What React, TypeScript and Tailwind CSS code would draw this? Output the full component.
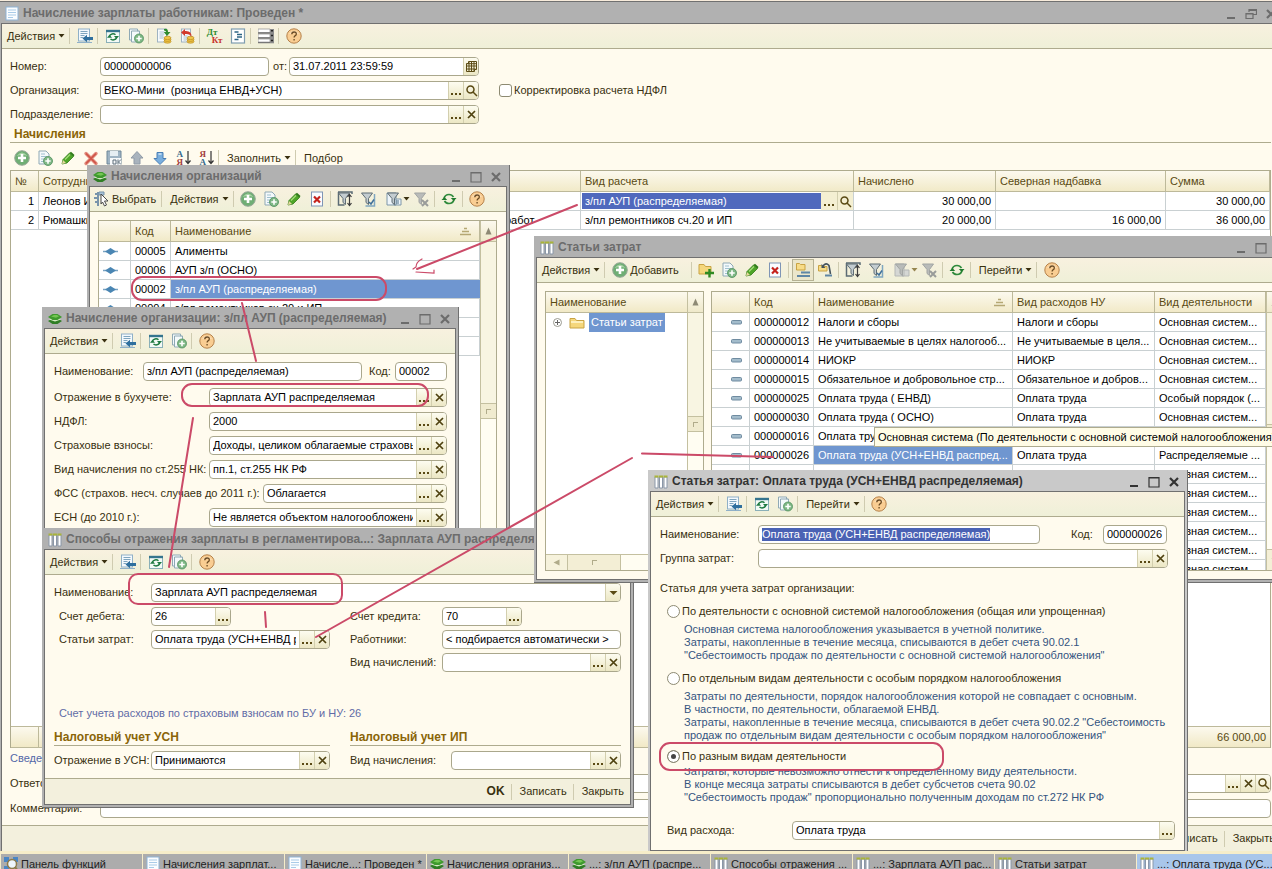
import { useEffect, useId, useRef } from "react";
import type { ReactNode } from "react";

/* ---------- icons ---------- */

function Svg({ children, w = 16, h = 16 }: { children: ReactNode; w?: number; h?: number }) {
  return (
    <svg width={w} height={h} viewBox={`0 0 ${w} ${h}`} fill="none" aria-hidden="true" className="shrink-0">
      {children}
    </svg>
  );
}

const PlusBadge = ({ x = 11, y = 11, r = 4.5 }: { x?: number; y?: number; r?: number }) => (
  <g>
    <circle cx={x} cy={y} r={r} fill="#7fb886" stroke="#4f8f5c" strokeWidth="0.8" />
    <path d={`M${x - r * 0.6} ${y}h${r * 1.2}M${x} ${y - r * 0.6}v${r * 1.2}`} stroke="#fff" strokeWidth={r > 5 ? 2.2 : 1.6} />
  </g>
);

const DocIcon = () => (
  <Svg>
    <rect x="2" y="1" width="12" height="13" fill="#fbfdff" stroke="#8fb3d6" />
    <path d="M4 4h8M4 6.500h8M4 9h8M4 11.500h5" stroke="#a9cbe8" />
  </Svg>
);
const LayersIcon = () => (
  <Svg>
    <path d="M1 10l4.500-2.500h5L15 10l-4.500 3h-5z" fill="#2f7d25" />
    <path d="M2 8.500l6-2.500 6 2.500-6 2z" fill="#d5ebc4" />
    <path d="M1 6l4.500-3h5L15 6l-4.500 3h-5z" fill="#3f9a2e" />
    <path d="M4 5.500l3-1.500h3l2 1.200-3 1.600z" fill="#74c653" />
  </Svg>
);
const TableIcon = () => (
  <Svg>
    <path d="M2 3h3v11H2zM6.500 3h3v11h-3zM11 3h3v11h-3z" fill="#fff" stroke="#8a97a8" />
    <path d="M1.500 2.500h4M6 2.500h4M10.500 2.500h4" stroke="#a9b43a" strokeWidth="2" />
  </Svg>
);
const GotoIcon = () => (
  <Svg>
    <rect x="1.500" y="1" width="11" height="12" fill="#f4f9fd" stroke="#8fb0c8" />
    <path d="M3.500 3.500h7M3.500 5.500h7M3.500 7.500h4M3.500 9.500h3" stroke="#7fa5bf" />
    <path d="M0 14.500h15" stroke="#8fb0c8" />
    <path d="M5.500 10.500L10 6.800v2.200h6v3h-6v2.200z" fill="#2f6f9e" />
  </Svg>
);
const RefreshWindowIcon = () => (
  <Svg>
    <rect x="1.500" y="2.500" width="13" height="12" fill="#f3faf6" stroke="#8ab0b8" />
    <path d="M1 3h14" stroke="#35748e" strokeWidth="2.400" />
    <path d="M4.500 8a3.500 2.800 0 0 1 6-1.200M11.500 9.800a3.500 2.800 0 0 1-6 1.200" stroke="#1f7a42" strokeWidth="1.500" />
    <path d="M9 8h5l-2.500 3zM2 9.800h5L4.500 6.800z" fill="#1f7a42" />
  </Svg>
);
const CopyDocIcon = () => (
  <Svg>
    <path d="M1.500 1h8v2h2v11h-8v-2h-2z" fill="#f4f9fb" stroke="#8fa9b5" />
    <path d="M3.500 12V3h7" stroke="#8fa9b5" />
    <PlusBadge x={11} y={10.500} />
  </Svg>
);
const NewDocIcon = () => (
  <Svg>
    <path d="M2 1h7l3 3v10H2z" fill="#f4f9fb" stroke="#8fa9b5" />
    <path d="M4 4h4M4 6.500h6M4 9h4M4 11.500h3" stroke="#9fc0cf" />
    <PlusBadge x={11} y={11} />
  </Svg>
);
const Coins = () => (
  <g fill="#f0c648" stroke="#b98a1c" strokeWidth="0.7">
    <ellipse cx="11.500" cy="13.500" rx="3.500" ry="1.700" />
    <ellipse cx="11.500" cy="11.700" rx="3.500" ry="1.700" />
    <ellipse cx="11.500" cy="9.900" rx="3.500" ry="1.700" />
  </g>
);
const PostIcon = () => (
  <Svg>
    <rect x="1.500" y="1" width="9" height="13" fill="#f7fafc" stroke="#9fb3c2" />
    <path d="M3.500 4h5M3.500 6h5M3.500 8h4M3.500 10h4" stroke="#a9bfce" />
    <Coins />
    <path d="M8 1q4-1 4 3h2.500L11 8 7.800 4H10q0-1.500-2-1.500z" fill="#2e8b2e" />
  </Svg>
);
const UnpostIcon = () => (
  <Svg>
    <rect x="2.500" y="1" width="9" height="13" fill="#f7fafc" stroke="#9fb3c2" />
    <path d="M4.500 8h4M4.500 10h4M4.500 12h3" stroke="#a9bfce" />
    <Coins />
    <path d="M2 4.500L6 1v2q7-.5 6.500 6Q11 5.500 6 6v2z" fill="#d23a2c" />
  </Svg>
);
const DtKtIcon = () => (
  <span aria-hidden="true" className="relative block size-4 font-serif text-[9px] leading-[8px] font-bold">
    <span className="absolute top-0 left-0 text-[#2e8b2e]">Дт</span>
    <span className="absolute top-[8px] left-[5px] text-[#c8322b]">Кт</span>
  </span>
);
const ReportIcon = () => (
  <Svg>
    <rect x="1.500" y="1" width="13" height="14" fill="#fff" stroke="#7f9db0" strokeWidth="1.200" />
    <path d="M4.500 4h4M7 6.500h5M7 9h5M4.500 11.500h4" stroke="#2c6484" strokeWidth="1.400" />
  </Svg>
);
const RowsIcon = () => (
  <Svg>
    <path d="M0 1h12v3.500H0zM0 6h12v3.500H0zM0 11h12v3.500H0z" fill="#fff" stroke="#9a9a9a" strokeWidth="0.8" />
    <path d="M0 5h16M0 10h16M0 14.500h16" stroke="#777" strokeWidth="1.300" />
    <path d="M12 1h4v14h-4z" fill="#8b8b8b" />
    <path d="M13 2.800h2M13 7.500h2M13 12.500h2" stroke="#222" strokeWidth="1.600" />
  </Svg>
);
const HelpIcon = () => (
  <Svg>
    <circle cx="8" cy="8" r="7.200" fill="#f9cd92" stroke="#b5814a" />
    <path d="M3 6q5-6 10 0-5-2-10 0z" fill="#fdebcf" />
    <path d="M5.800 6.200q0-2.200 2.300-2.200t2.200 2q0 1.200-1.300 1.900-.9.500-.9 1.600M8.100 11v1.600" stroke="#6b4a22" strokeWidth="1.300" />
  </Svg>
);
const AddIcon = () => (
  <Svg>
    <circle cx="8" cy="8" r="7.300" fill="#6fae74" stroke="#98a898" />
    <path d="M2.500 6q5.500-7 11 0-5-2-11 0z" fill="#a9d3a6" />
    <path d="M4 8h8M8 4v8" stroke="#fff" strokeWidth="2.600" />
  </Svg>
);
const PencilIcon = () => (
  <Svg>
    <path d="M2 14l1-4.500L9.500 3l4 3.500L7 13z" fill="#4ea528" stroke="#2f7a18" strokeWidth="0.8" />
    <path d="M9.500 3l1.500-1.200 3.500 3.200-1 1.500z" fill="#2f7a18" />
    <path d="M2 14l1-4 3 3z" fill="#e7d9a0" />
    <path d="M5 9.500l5-5" stroke="#a5dd7a" strokeWidth="1.300" />
  </Svg>
);
const RedXIcon = () => (
  <Svg>
    <path d="M3 3.500l10 10M13 3.500l-10 10" stroke="#e28a7c" strokeWidth="3.400" strokeLinecap="round" />
    <path d="M3 3.500l10 10M13 3.500l-10 10" stroke="#cf5548" strokeWidth="1.600" />
  </Svg>
);
const SaveIcon = () => (
  <Svg>
    <path d="M1 1h14v13H1z" fill="#9fb4c4" stroke="#6f8798" />
    <path d="M4 1h8v5H4z" fill="#e6eef3" />
    <path d="M4 8h11v7H4z" fill="#f7f9fa" />
    <path d="M7 10h3v4H7zM12 9.500v5M15 9.500l-2.500 2.500 2.500 2.500" stroke="#5c6c78" />
  </Svg>
);
const UpIcon = () => (
  <Svg>
    <path d="M8 1.500L14 8h-3v6H5V8H2z" fill="#a9b3bd" stroke="#8f9aa6" />
  </Svg>
);
const DownIcon = () => (
  <Svg>
    <path d="M8 14.500L14 8.500h-3V2.500H5v6H2z" fill="#79aede" stroke="#4a7fb5" />
    <path d="M6.500 4h3" stroke="#cfe4f6" strokeWidth="1.500" />
  </Svg>
);
const SortIcon = ({ top, bottom }: { top: string; bottom: string }) => (
  <span aria-hidden="true" className="relative block size-4 font-serif text-[9px] leading-[8px] font-bold">
    <span className={`absolute top-0 left-[2px] ${top === "А" ? "text-[#35688c]" : "text-[#a33b3b]"}`}>{top}</span>
    <span className={`absolute top-[8px] left-[2px] ${top === "А" ? "text-[#a33b3b]" : "text-[#35688c]"}`}>{bottom}</span>
    <svg viewBox="0 0 6 15" className="absolute top-0 right-0 h-[15px] w-[6px]" fill="none">
      <path d="M3 1v12M0.500 10.500L3 13.500l2.500-3" stroke="#333" strokeWidth="1.200" />
    </svg>
  </span>
);
const DeleteDocIcon = () => (
  <Svg>
    <rect x="2.500" y="1" width="11" height="14" fill="#fafcff" stroke="#7f95b5" />
    <path d="M5 5.500l6 6M11 5.500l-6 6" stroke="#c5221c" strokeWidth="2.200" />
  </Svg>
);
const FunnelIcon = ({ kind }: { kind: "settings" | "value" | "history" | "historyOff" | "clear" }) => {
  const dim = kind === "historyOff" || kind === "clear";
  return (
    <Svg>
      {kind === "settings" && <path d="M1 1h14v2M1.500 1v13h6" stroke="#5b6b74" strokeWidth="1.500" />}
      {kind === "value" && <path d="M14.500 3v12h-9" stroke="#7fa6c0" strokeWidth="1.500" />}
      {(kind === "history" || kind === "historyOff") && (
        <path d="M1 2h9v12H1zM8 8h7v6H8z" fill={dim ? "#d5d7d4" : "#eef5fa"} stroke={dim ? "#b5b8b6" : "#7d96a8"} />
      )}
      <path d="M1.500 2h11L8.500 7.500v6l-2.500-2v-4z" fill={dim ? "#b9bbb9" : "#c3ccd0"} stroke={dim ? "#a2a5a3" : "#5f6d74"} />
      {kind === "settings" && <path d="M12.500 4v10M10.500 12l2 2.500 2-2.500M10.500 6l2-2.500 2 2.500" stroke="#3d3d3d" strokeWidth="1.200" />}
      {kind === "value" && <path d="M9 11l2 2 3-4.500" stroke="#3f6f9a" strokeWidth="1.500" />}
      {kind === "history" && <path d="M10 10h3M10 12h3" stroke="#4f7088" />}
      {kind === "clear" && <path d="M9 9l6 6M15 9l-6 6" stroke="#999c9a" strokeWidth="2" />}
    </Svg>
  );
};
const RefreshIcon = () => (
  <Svg>
    <path d="M3 7.500Q4 3.500 8 3.500q3 0 4.500 2.500M13 8.500q-1 4-5 4-3 0-4.500-2.500" stroke="#2f8a3c" strokeWidth="1.700" />
    <path d="M9.800 7h5.700l-2.700 3zM.500 9h5.700L3.400 6z" fill="#1f7a2d" />
  </Svg>
);
const ChooseIcon = () => (
  <Svg>
    <path d="M4 1v14M1 3h3M0 7h3M1 11h3" stroke="#7793ab" strokeWidth="2" />
    <path d="M5 1h5v3H5z" fill="#a9c4da" stroke="#7793ab" />
    <path d="M7 3l7 7h-3.500l2 4-2 1-2-4L7 13z" fill="#fff" stroke="#4a4a4a" />
  </Svg>
);
const FolderIcon = () => (
  <Svg>
    <path d="M1 13V3.500h5l1.500 2H15V13z" fill="#f5d77c" stroke="#c9a343" />
    <path d="M2 7h12" stroke="#fdf0bd" strokeWidth="2" />
  </Svg>
);
const FolderAddIcon = () => (
  <Svg>
    <path d="M1 12V2.500h5l1.500 2H13V12z" fill="#f5d77c" stroke="#c9a343" />
    <path d="M7 11h9M11.500 7v8.500" stroke="#2f8a22" strokeWidth="2.400" />
  </Svg>
);
const HierarchyIcon = () => (
  <Svg>
    <path d="M1.500 8V1.500h3l1 1H10V8z" fill="#f7dc88" stroke="#c9a343" />
    <path d="M6 10.500h9M2 14h13" stroke="#5f86a5" strokeWidth="2" />
  </Svg>
);
const MoveIcon = () => (
  <Svg>
    <path d="M1.500 9V3.500h3l1 1H10V9z" fill="#f7dc88" stroke="#c9a343" />
    <path d="M6 4Q9 0 12 3.500l1.500 8.500" stroke="#44525c" strokeWidth="1.600" />
    <path d="M4.500 2v4h4z" fill="#44525c" />
    <path d="M8 13.500h7" stroke="#5f86a5" strokeWidth="2" />
  </Svg>
);
const PanelIcon = () => (
  <Svg>
    <path d="M1 1h5v5H1zM10 1h5v5h-5zM1 10h5v5H1z" fill="#4a86c5" />
    <circle cx="9" cy="8" r="4.500" fill="#eef6fc" stroke="#8d7b4a" strokeWidth="1.500" />
    <path d="M12 11l3 4" stroke="#8d7b4a" strokeWidth="2" />
  </Svg>
);
const Caret = ({ dim = false }: { dim?: boolean }) => (
  <Svg w={7} h={4}>
    <path d="M0.500 0h6L3.500 3.500z" fill={dim ? "#96854f" : "#3a3010"} />
  </Svg>
);
const SortMark = () => (
  <Svg w={13} h={9}>
    <path d="M5 1.500h3M3 4.500h7M1 7.500h11" stroke="#b5a773" strokeWidth="1.500" />
  </Svg>
);

/* ---------- controls ---------- */

type FieldButton = "dots" | "x" | "search" | "calendar" | "drop";

const BUTTON_TITLES: Record<FieldButton, string> = {
  dots: "Выбрать",
  x: "Очистить",
  search: "Открыть",
  calendar: "Календарь",
  drop: "Список",
};

function FieldGlyph({ kind }: { kind: FieldButton }) {
  return (
    <Svg w={13} h={13}>
      {kind === "dots" && <path d="M1 9h2v2H1zM5 9h2v2H5zM9 9h2v2H9z" fill="#5a4a14" />}
      {kind === "x" && <path d="M3 3l7 7M10 3l-7 7" stroke="#4f4210" strokeWidth="1.700" />}
      {kind === "search" && <path d="M9 5.500a3.500 3.500 0 1 1-7 0 3.500 3.500 0 0 1 7 0zM8 8l4 4" stroke="#5a4a14" strokeWidth="1.500" />}
      {kind === "calendar" && <path d="M3.500 1.500h8v8h-2v2h-8v-8h2zM1.500 6h10M1.500 9h9M4 2v9M6.500 2v9M9 2v9M2 3.700h9" stroke="#5a4a14" />}
      {kind === "drop" && <path d="M2.500 5h8l-4 4z" fill="#5a4a14" />}
    </Svg>
  );
}

function Field({
  value = "",
  buttons = [],
  className = "",
  label,
  id,
  selected = false,
}: {
  value?: string;
  buttons?: FieldButton[];
  className?: string;
  label?: string;
  id?: string;
  selected?: boolean;
}) {
  const ref = useRef<HTMLInputElement>(null);
  useEffect(() => {
    if (selected && ref.current) {
      ref.current.focus({ preventScroll: true });
      ref.current.select();
    }
  }, [selected]);
  return (
    <div className={`flex h-[19px] min-w-0 overflow-hidden rounded-[4px] border border-[#aaa78c] bg-white ${className}`}>
      <input
        ref={ref}
        id={id}
        aria-label={label}
        defaultValue={value}
        className="min-w-0 flex-1 bg-transparent px-[3px] text-black outline-none selection:bg-[#4a62b4] selection:text-white"
      />
      {buttons.map((b) => (
        <button
          key={b}
          type="button"
          aria-label={BUTTON_TITLES[b]}
          className="flex w-[15px] shrink-0 items-center justify-center border-l border-[#d3cfae] bg-linear-to-b from-[#fdfcf0] to-[#ece7c4]"
        >
          <FieldGlyph kind={b} />
        </button>
      ))}
    </div>
  );
}

function Row({
  label,
  labelClass,
  fieldClass = "flex-1",
  value,
  buttons,
  selected,
}: {
  label: string;
  labelClass: string;
  fieldClass?: string;
  value?: string;
  buttons?: FieldButton[];
  selected?: boolean;
}) {
  const id = useId();
  return (
    <>
      <label htmlFor={id} className={`shrink-0 whitespace-nowrap ${labelClass}`}>
        {label}
      </label>
      <Field id={id} value={value} buttons={buttons} className={fieldClass} selected={selected} />
    </>
  );
}

const Sep = () => <span className="mr-[3px] ml-px h-4 w-px shrink-0 bg-[#cfcbb0]" />;

function Tool({ title, children }: { title: string; children: ReactNode }) {
  return (
    <button type="button" aria-label={title} className="flex h-[22px] w-[23px] shrink-0 items-center justify-center">
      {children}
    </button>
  );
}

function DropTool({ title, children, dim }: { title: string; children: ReactNode; dim?: boolean }) {
  return (
    <button type="button" aria-label={title} className="flex h-[22px] w-[30px] shrink-0 items-center justify-end">
      {children}
      <span className="ml-px">
        <Caret dim={dim} />
      </span>
    </button>
  );
}

function TextTool({ children, caret = false, icon }: { children: ReactNode; caret?: boolean; icon?: ReactNode }) {
  return (
    <button type="button" className={`flex shrink-0 items-center whitespace-nowrap ${icon ? "gap-[2px] px-[4px]" : caret ? "gap-[3px] pr-[3px] pl-[5px]" : "px-[5px]"}`}>
      {icon}
      <span>{children}</span>
      {caret && <Caret />}
    </button>
  );
}

const Toolbar = ({ children }: { children: ReactNode }) => (
  <div className="flex h-[25px] shrink-0 items-center overflow-hidden border-b border-[#aeab8e] bg-linear-to-b from-[#f8f1df] to-[#eff0d8]">
    {children}
  </div>
);

const CommonTools = () => (
  <>
    <TextTool caret>Действия</TextTool>
    <Sep />
    <Tool title="Перейти к списку"><GotoIcon /></Tool>
    <Sep />
    <Tool title="Перечитать"><RefreshWindowIcon /></Tool>
    <Tool title="Скопировать"><CopyDocIcon /></Tool>
  </>
);

function Window({
  title,
  icon,
  className,
  active = false,
  restore = false,
  children,
}: {
  title: string;
  icon: ReactNode;
  className: string;
  active?: boolean;
  restore?: boolean;
  children: ReactNode;
}) {
  const tone = active ? "text-[#333]" : "text-[#6c6c6c]";
  return (
    <section
      aria-label={title}
      className={`absolute flex flex-col border-r border-b border-[#707070] px-[2px] pb-[2px] ${active ? "bg-[#c9c9c9]" : "bg-[#b1b1b1]"} ${className}`}
    >
      <header className={`flex h-[21px] shrink-0 items-center pt-[2px] pr-px pl-[3px] ${tone}`}>
        {icon}
        <h2 className="ml-[3px] min-w-0 flex-1 overflow-hidden text-[12px] font-bold whitespace-pre">{title}</h2>
        <button type="button" aria-label="Свернуть" className="flex w-5 justify-center">
          <Svg w={12} h={12}><path d="M2 10h8" stroke="currentColor" strokeWidth="2" /></Svg>
        </button>
        <button type="button" aria-label="Развернуть" className="flex w-5 justify-center">
          <Svg w={12} h={12}>
            {restore ? (
              <path d="M4 4V1.500h7.500v5H8M1 5.500h7v5H1zM4 2.500h7M1 6h7" stroke="currentColor" strokeWidth="1.200" />
            ) : (
              <path d="M1 1.500h10v9.500H1zM1 2h10" stroke="currentColor" strokeWidth="1.200" />
            )}
          </Svg>
        </button>
        <button type="button" aria-label="Закрыть" className="flex w-5 justify-center">
          <Svg w={12} h={12}><path d="M2 2l8 8M10 2l-8 8" stroke="currentColor" strokeWidth="2.200" /></Svg>
        </button>
      </header>
      <div className="flex min-h-0 flex-1 flex-col border border-[#707070] bg-[#fffbee]">{children}</div>
    </section>
  );
}

const TH = "h-[21px] overflow-hidden border-r border-b border-[#bdb99a] px-[4px] text-left font-normal whitespace-nowrap text-[#594a12]";
const TD = "h-[19px] overflow-hidden border-r border-b border-[#c9d0d2] px-[4px] whitespace-nowrap text-black";
const HEAD = "bg-linear-to-b from-[#fcf9ee] to-[#f1e9c6]";
const TABLE = "w-full table-fixed border-separate border-spacing-0";

function Scroll({ track, bottom = false }: { track: string; bottom?: boolean }) {
  return (
    <div aria-hidden="true" className="flex w-4 shrink-0 flex-col border-l border-[#c4c0a0] bg-[#fffdf2]">
      <span className="flex h-[21px] shrink-0 items-center justify-center border-b border-[#c4c0a0] bg-linear-to-b from-[#fcf9ee] to-[#efe9ca]">
        <Svg w={7} h={8}><path d="M3.500 0.500L6.500 7.500h-6z" fill="#8d8974" /></Svg>
      </span>
      <span className={`shrink-0 bg-[#f8f5e2] ${track}`} />
      <span className="flex h-4 shrink-0 items-center justify-center border-y border-[#c4c0a0] bg-[#f0ebcf]">
        <span className="size-[5px] border-t border-l border-[#b0ab8a]" />
      </span>
      <span className="flex-1" />
      {bottom && (
        <span className="flex h-[21px] shrink-0 items-center justify-center border-t border-[#c4c0a0] bg-[#f4efd6]">
          <Caret dim />
        </span>
      )}
    </div>
  );
}

/* ---------- windows ---------- */

function MainWindow() {
  const checkId = useId();
  const commentId = useId();
  return (
    <Window title="Начисление зарплаты работникам: Проведен *" icon={<DocIcon />} restore className="top-px right-[-13px] bottom-[-4px] left-[-1px] border-t">
      <Toolbar>
        <CommonTools />
        <Sep />
        <Tool title="Провести"><PostIcon /></Tool>
        <Tool title="Отменить проведение"><UnpostIcon /></Tool>
        <Sep />
        <Tool title="Дт Кт"><DtKtIcon /></Tool>
        <Tool title="Отчет"><ReportIcon /></Tool>
        <Sep />
        <Tool title="Список"><RowsIcon /></Tool>
        <Sep />
        <Tool title="Справка"><HelpIcon /></Tool>
      </Toolbar>
      <div className="flex min-h-0 flex-1 flex-col pr-[10px] pl-2">
        <div className="flex flex-col gap-[5px] pt-[8px]">
          <div className="flex items-center">
            <Row label="Номер:" labelClass="w-[90px]" fieldClass="w-[169px]" value="00000000006" />
            <Row label="от:" labelClass="ml-1 w-4" fieldClass="w-[190px]" value="31.07.2011 23:59:59" buttons={["calendar"]} />
          </div>
          <div className="flex items-center">
            <Row label="Организация:" labelClass="w-[90px]" fieldClass="w-[379px]" value="ВЕКО-Мини  (розница ЕНВД+УСН)" buttons={["dots", "search"]} />
            <input id={checkId} type="checkbox" className="ml-5 size-[13px] appearance-none rounded-[3px] border border-[#8d8a72] bg-white" />
            <label htmlFor={checkId} className="ml-[2px]">Корректировка расчета НДФЛ</label>
          </div>
          <div className="flex items-center">
            <Row label="Подразделение:" labelClass="w-[90px]" fieldClass="w-[379px]" buttons={["dots", "x"]} />
          </div>
        </div>
        <h3 className="flex h-[19px] shrink-0 items-center border-b border-[#aeab8e] pt-[2px] pl-[4px] text-[12px] font-bold text-[#8a6508]">Начисления</h3>
        <div className="flex h-[27px] shrink-0 items-center pt-[3px]">
          <Tool title="Добавить"><AddIcon /></Tool>
          <Tool title="Скопировать"><NewDocIcon /></Tool>
          <Tool title="Изменить"><PencilIcon /></Tool>
          <Tool title="Удалить"><RedXIcon /></Tool>
          <Tool title="Закончить"><SaveIcon /></Tool>
          <Tool title="Вверх"><UpIcon /></Tool>
          <Tool title="Вниз"><DownIcon /></Tool>
          <Tool title="По возрастанию"><SortIcon top="А" bottom="Я" /></Tool>
          <Tool title="По убыванию"><SortIcon top="Я" bottom="А" /></Tool>
          <Sep />
          <TextTool caret>Заполнить</TextTool>
          <Sep />
          <TextTool>Подбор</TextTool>
        </div>
        <div className="flex min-h-0 flex-1 flex-col border-t border-r border-l border-[#aeab8e] bg-white">
          <table className={TABLE}>
            <colgroup>
              <col className="w-[28px]" />
              <col className="w-[462px]" />
              <col className="w-[80px]" />
              <col className="w-[273px]" />
              <col className="w-[142px]" />
              <col className="w-[170px]" />
              <col />
            </colgroup>
            <thead className={HEAD}>
              <tr>
                <th className={TH}>№</th>
                <th className={TH}>Сотрудник</th>
                <th className={TH} aria-label="Вид работ" />
                <th className={TH}>Вид расчета</th>
                <th className={TH}>Начислено</th>
                <th className={TH}>Северная надбавка</th>
                <th className={TH}>Сумма</th>
              </tr>
            </thead>
            <tbody>
              <tr>
                <td className={`${TD} text-right`}>1</td>
                <td className={TD}>Леонов И.</td>
                <td className={TD} />
                <td className="h-[19px] border-r border-b border-[#c9d0d2] p-0">
                  <div className="flex h-[18px]">
                    <input aria-label="Вид расчета" defaultValue="з/пл АУП (распределяемая)" className="my-px ml-px min-w-0 flex-1 bg-[#5069bd] px-[3px] text-white outline-none" />
                    <button type="button" aria-label="Выбрать" className="flex w-[16px] items-center justify-center bg-[#f4efd2]"><FieldGlyph kind="dots" /></button>
                    <button type="button" aria-label="Открыть" className="flex w-[16px] items-center justify-center border-l border-[#d3cfae] bg-[#f4efd2]"><FieldGlyph kind="search" /></button>
                  </div>
                </td>
                <td className={`${TD} text-right`}>30 000,00</td>
                <td className={TD} />
                <td className={`${TD} text-right`}>30 000,00</td>
              </tr>
              <tr>
                <td className={`${TD} text-right`}>2</td>
                <td className={TD}>Рюмашкин</td>
                <td className={TD}>работ</td>
                <td className={TD}>з/пл ремонтников сч.20 и ИП</td>
                <td className={`${TD} text-right`}>20 000,00</td>
                <td className={`${TD} text-right`}>16 000,00</td>
                <td className={`${TD} text-right`}>36 000,00</td>
              </tr>
            </tbody>
          </table>
          <div className="flex-1" />
          <div className={`flex h-[22px] items-center justify-between border-y border-[#bdb99a] pr-[4px] text-[#594a12] ${HEAD}`}>
            <span className="h-full w-[28px] border-r border-[#bdb99a]" />
            <span>66 000,00</span>
          </div>
        </div>
        <p className="h-[26px] shrink-0 pt-[4px] text-[#5468a8]">Сведения</p>
        <div className="flex shrink-0 items-center">
          <Row label="Ответственный:" labelClass="w-[90px]" buttons={["dots", "x", "search"]} />
        </div>
        <div className="mt-[6px] mb-[7px] flex shrink-0 items-center">
          <label htmlFor={commentId} className="w-[90px] shrink-0">Комментарии:</label>
          <Field id={commentId} className="flex-1" />
        </div>
      </div>
      <FooterBar />
    </Window>
  );
}

const FooterBar = () => (
  <footer className="flex h-[26px] shrink-0 items-center justify-end border-t border-[#aeab8e] bg-[#f3f0dd] pr-px">
    <button type="button" className="px-[5px] text-[12px] font-bold">OK</button>
    <Sep />
    <TextTool>Записать</TextTool>
    <Sep />
    <TextTool>Закрыть</TextTool>
  </footer>
);

const CHARGES = [
  ["00005", "Алименты"],
  ["00006", "АУП з/п (ОСНО)"],
  ["00002", "з/пл АУП (распределяемая)"],
  ["00004", "з/пл ремонтников сч.20 и ИП"],
  ["", ""],
  ["", ""],
];

function ChargesWindow() {
  return (
    <Window title="Начисления организаций" icon={<LayersIcon />} className="top-[165px] left-[87px] h-[420px] w-[423px]">
      <Toolbar>
        <TextTool icon={<ChooseIcon />}>Выбрать</TextTool>
        <Sep />
        <TextTool caret>Действия</TextTool>
        <Sep />
        <Tool title="Добавить"><AddIcon /></Tool>
        <Tool title="Скопировать"><NewDocIcon /></Tool>
        <Tool title="Изменить"><PencilIcon /></Tool>
        <Tool title="Пометить на удаление"><DeleteDocIcon /></Tool>
        <Sep />
        <Tool title="Отбор"><FunnelIcon kind="settings" /></Tool>
        <Tool title="Отбор по значению"><FunnelIcon kind="value" /></Tool>
        <DropTool title="История отборов"><FunnelIcon kind="history" /></DropTool>
        <Tool title="Отключить отбор"><FunnelIcon kind="clear" /></Tool>
        <Sep />
        <Tool title="Обновить"><RefreshIcon /></Tool>
        <Sep />
        <Tool title="Справка"><HelpIcon /></Tool>
      </Toolbar>
      <div className="flex min-h-0 flex-1 p-2 pr-[9px]">
        <div className="flex min-w-0 flex-1 border border-[#aeab8e] bg-white">
          <div className="min-w-0 flex-1">
            <table className={TABLE}>
              <colgroup>
                <col className="w-[32px]" />
                <col className="w-[40px]" />
                <col />
              </colgroup>
              <thead className={HEAD}>
                <tr>
                  <th className={TH} aria-label="Пометка" />
                  <th className={TH}>Код</th>
                  <th className={TH}>
                    <span className="flex items-center justify-between pr-[3px]">Наименование<SortMark /></span>
                  </th>
                </tr>
              </thead>
              <tbody>
                {CHARGES.map(([code, name], i) => (
                  <tr key={i}>
                    <td className={TD}>
                      {code && (
                        <Svg w={15} h={9}>
                          <path d="M0 4.500h15" stroke="#7aa3c2" strokeWidth="1.500" />
                          <path d="M2 4.500L7.500 1 13 4.500 7.500 8z" fill="#4a86b3" />
                        </Svg>
                      )}
                    </td>
                    <td className={TD}>{code}</td>
                    <td className={i === 2 ? "h-[19px] border-b border-[#c9d0d2] bg-[#6f96d0] px-[4px] text-white" : TD}>{name}</td>
                  </tr>
                ))}
              </tbody>
            </table>
          </div>
          <Scroll track="h-[161px]" />
        </div>
      </div>
    </Window>
  );
}

function ChargeCardWindow() {
  return (
    <Window title="Начисление организации: з/пл АУП (распределяемая)" icon={<LayersIcon />} className="top-[307px] left-[42px] w-[417px]">
      <Toolbar>
        <CommonTools />
        <Sep />
        <Tool title="Справка"><HelpIcon /></Tool>
      </Toolbar>
      <div className="flex flex-col gap-[5px] py-2 pr-2 pl-[9px]">
        <div className="mb-[2px] flex items-center">
          <Row label="Наименование:" labelClass="w-[89px]" value="з/пл АУП (распределяемая)" />
          <Row label="Код:" labelClass="ml-[7px] w-[26px]" fieldClass="w-[52px]" value="00002" />
        </div>
        <div className="flex items-center"><Row label="Отражение в бухучете:" labelClass="w-[155px]" value="Зарплата АУП распределяемая" buttons={["dots", "x"]} /></div>
        <div className="flex items-center"><Row label="НДФЛ:" labelClass="w-[155px]" value="2000" buttons={["dots", "x"]} /></div>
        <div className="flex items-center"><Row label="Страховые взносы:" labelClass="w-[155px]" value="Доходы, целиком облагаемые страховыми взносами" buttons={["dots", "x"]} /></div>
        <div className="flex items-center"><Row label="Вид начисления по ст.255 НК:" labelClass="w-[155px]" value="пп.1, ст.255 НК РФ" buttons={["dots", "x"]} /></div>
        <div className="flex items-center"><Row label="ФСС (страхов. несч. случаев до 2011 г.):" labelClass="w-[209px]" value="Облагается" buttons={["dots", "x"]} /></div>
        <div className="flex items-center"><Row label="ЕСН (до 2010 г.):" labelClass="w-[155px]" value="Не является объектом налогообложения" buttons={["dots", "x"]} /></div>
      </div>
    </Window>
  );
}

const H3 = "flex h-4 items-center border-b border-[#aeab8e] text-[12px] font-bold text-[#8a6508]";

function ReflectionWindow() {
  return (
    <Window title="Способы отражения зарплаты в регламентирова...: Зарплата АУП распределяемая" icon={<TableIcon />} className="top-[528px] left-[42px] w-[592px]">
      <Toolbar>
        <CommonTools />
        <Sep />
        <Tool title="Справка"><HelpIcon /></Tool>
      </Toolbar>
      <div className="flex flex-col px-[9px] pt-2 pb-[8px]">
        <div className="flex items-center">
          <Row label="Наименование:" labelClass="w-[97px]" value="Зарплата АУП распределяемая" buttons={["drop"]} />
        </div>
        <div className="mt-[5px] grid grid-cols-[276px_minmax(0,1fr)] gap-x-5 gap-y-[4px]">
          <div className="flex items-center pl-[5px]"><Row label="Счет дебета:" labelClass="w-[92px]" fieldClass="w-20" value="26" buttons={["dots"]} /></div>
          <div className="flex items-center"><Row label="Счет кредита:" labelClass="w-[92px]" fieldClass="w-20" value="70" buttons={["dots"]} /></div>
          <div className="flex items-center pl-[5px]"><Row label="Статьи затрат:" labelClass="w-[92px]" value="Оплата труда (УСН+ЕНВД распределяемая)" buttons={["dots", "x"]} /></div>
          <div className="flex items-center"><Row label="Работники:" labelClass="w-[92px]" value="< подбирается автоматически >" /></div>
          <div />
          <div className="flex items-center"><Row label="Вид начислений:" labelClass="w-[92px]" buttons={["dots", "x"]} /></div>
        </div>
        <p className="mt-[35px] pl-[5px] text-[#5f6ba6]">Счет учета расходов по страховым взносам по БУ и НУ: 26</p>
        <div className="mt-[10px] grid grid-cols-[276px_minmax(0,1fr)] gap-x-5 gap-y-[5px]">
          <h3 className={H3}>Налоговый учет УСН</h3>
          <h3 className={H3}>Налоговый учет ИП</h3>
          <div className="flex items-center"><Row label="Отражение в УСН:" labelClass="w-[97px]" value="Принимаются" buttons={["dots", "x"]} /></div>
          <div className="flex items-center"><Row label="Вид начисления:" labelClass="w-[101px]" buttons={["dots", "x"]} /></div>
        </div>
      </div>
      <FooterBar />
    </Window>
  );
}

const MAIN_SYSTEM = "Основная систем...";
const COSTS = [
  ["000000012", "Налоги и сборы", "Налоги и сборы", MAIN_SYSTEM],
  ["000000013", "Не учитываемые в целях налогооб...", "Не учитываемые в целя...", MAIN_SYSTEM],
  ["000000014", "НИОКР", "НИОКР", MAIN_SYSTEM],
  ["000000015", "Обязательное и добровольное стр...", "Обязательное и добров...", MAIN_SYSTEM],
  ["000000025", "Оплата труда ( ЕНВД)", "Оплата труда", "Особый порядок (..."],
  ["000000030", "Оплата труда ( ОСНО)", "Оплата труда", MAIN_SYSTEM],
  ["000000016", "Оплата труда", "", ""],
  ["000000026", "Оплата труда (УСН+ЕНВД распред...", "Оплата труда", "Распределяемые ..."],
  ["", "", "", MAIN_SYSTEM],
  ["", "", "", MAIN_SYSTEM],
  ["", "", "", MAIN_SYSTEM],
  ["", "", "", MAIN_SYSTEM],
  ["", "", "", MAIN_SYSTEM],
  ["", "", "", MAIN_SYSTEM],
];

function CostItemsWindow() {
  return (
    <Window title="Статьи затрат" icon={<TableIcon />} className="top-[236px] right-[-23px] left-[534px]">
      <Toolbar>
        <TextTool caret>Действия</TextTool>
        <Sep />
        <TextTool icon={<AddIcon />}><span className="underline">Д</span>обавить</TextTool>
        <span className="w-[7px]" />
        <Sep />
        <Tool title="Новая группа"><FolderAddIcon /></Tool>
        <Tool title="Скопировать"><NewDocIcon /></Tool>
        <Tool title="Изменить"><PencilIcon /></Tool>
        <Tool title="Пометить на удаление"><DeleteDocIcon /></Tool>
        <Sep />
        <button type="button" aria-label="Иерархический просмотр" className="flex h-[22px] w-[22px] shrink-0 items-center justify-center border border-[#b5b193] bg-[#ebe6cb]"><HierarchyIcon /></button>
        <Tool title="Переместить в группу"><MoveIcon /></Tool>
        <Sep />
        <Tool title="Отбор"><FunnelIcon kind="settings" /></Tool>
        <Tool title="Отбор по значению"><FunnelIcon kind="value" /></Tool>
        <DropTool title="История отборов" dim><FunnelIcon kind="historyOff" /></DropTool>
        <Tool title="Отключить отбор"><FunnelIcon kind="clear" /></Tool>
        <Sep />
        <Tool title="Обновить"><RefreshIcon /></Tool>
        <Sep />
        <TextTool caret>Перейти</TextTool>
        <Sep />
        <Tool title="Справка"><HelpIcon /></Tool>
      </Toolbar>
      <div className="flex h-[296px] gap-[7px] p-2">
        <div className="flex w-[159px] shrink-0 flex-col border border-[#aeab8e] bg-white">
          <div className="flex min-h-0 flex-1">
            <div className="min-w-0 flex-1">
              <div className={`flex h-[21px] items-center border-b border-[#bdb99a] pl-[4px] text-[#594a12] ${HEAD}`}>Наименование</div>
              <div className="flex h-[19px] items-center pl-[7px]">
                <Svg w={9} h={9}>
                  <circle cx="4.500" cy="4.500" r="4" stroke="#9a9a90" fill="#fff" />
                  <path d="M2 4.500h5M4.500 2v5" stroke="#666" />
                </Svg>
                <span className="mr-[4px] ml-[7px]"><FolderIcon /></span>
                <span className="bg-[#6f96d0] px-[2px] leading-[19px] text-white">Статьи затрат</span>
              </div>
            </div>
            <Scroll track="h-[103px]" />
          </div>
          <div aria-hidden="true" className="flex h-4 shrink-0 border-t border-[#c4c0a0]">
            <span className="flex w-[21px] items-center justify-center bg-[#f6f2dc]">
              <Svg w={7} h={7}><path d="M6.500 0.500v6L0.500 3.500z" fill="#b0ab8a" /></Svg>
            </span>
            <span className="flex w-[54px] items-center justify-center border-x border-[#c4c0a0] bg-[#f3eed5]">
              <span className="size-[5px] border-t border-l border-[#b0ab8a]" />
            </span>
            <span className="flex-1 bg-[#fffdf2]" />
          </div>
        </div>
        <div className="flex min-w-0 flex-1 border border-[#aeab8e] bg-white">
          <div className="min-w-0 flex-1 overflow-hidden">
            <table className={TABLE}>
              <colgroup>
                <col className="w-[38px]" />
                <col className="w-[64px]" />
                <col />
                <col className="w-[142px]" />
                <col className="w-[111px]" />
              </colgroup>
              <thead className={HEAD}>
                <tr>
                  <th className={TH} aria-label="Пометка" />
                  <th className={TH}>Код</th>
                  <th className={TH}>
                    <span className="flex items-center justify-between pr-[2px]">Наименование<SortMark /></span>
                  </th>
                  <th className={TH}>Вид расходов НУ</th>
                  <th className={TH}>Вид деятельности</th>
                </tr>
              </thead>
              <tbody>
                {COSTS.map(([code, name, kind, activity], i) => (
                  <tr key={i}>
                    <td className={`${TD} pl-[19px]`}>
                      <Svg w={11} h={5}><rect x="0.500" y="0.500" width="10" height="3.500" rx="1" fill="#a3bccb" stroke="#6f8ba0" /></Svg>
                    </td>
                    <td className={TD}>{code}</td>
                    <td className={i === 7 ? "h-[19px] overflow-hidden border-r border-b border-[#c9d0d2] bg-[#6f96d0] px-[4px] whitespace-nowrap text-white" : TD}>{name}</td>
                    <td className={TD}>{kind}</td>
                    <td className={TD}>{activity}</td>
                  </tr>
                ))}
              </tbody>
            </table>
          </div>
          <Scroll track="h-[111px]" bottom />
        </div>
      </div>
      <div role="tooltip" className="absolute top-[191px] left-[340px] flex h-5 items-center border border-[#aeab8e] bg-[#fffce6] px-[3px] whitespace-nowrap text-black">
        Основная система (По деятельности с основной системой налогообложения)
      </div>
    </Window>
  );
}

function RadioItem({ label, checked = false, className }: { label: string; checked?: boolean; className: string }) {
  const id = useId();
  return (
    <div className={`flex items-center pl-[7px] ${className}`}>
      <input
        id={id}
        type="radio"
        name="cost-activity"
        defaultChecked={checked}
        className="size-[13px] shrink-0 appearance-none rounded-full border border-[#8d8a72] bg-white checked:bg-[#444] checked:shadow-[inset_0_0_0_3px_#fff]"
      />
      <label htmlFor={id} className="ml-[2px] whitespace-nowrap">{label}</label>
    </div>
  );
}

const DESC = "pl-6 whitespace-nowrap text-[#34547f]";

function CostItemWindow() {
  return (
    <Window title="Статья затрат: Оплата труда (УСН+ЕНВД распределяемая)" icon={<TableIcon />} active className="top-[470px] left-[648px] w-[540px]">
      <Toolbar>
        <CommonTools />
        <Sep />
        <TextTool caret>Перейти</TextTool>
        <Sep />
        <Tool title="Справка"><HelpIcon /></Tool>
      </Toolbar>
      <div className="px-[9px] pt-2 pb-[10px]">
        <div className="flex flex-col gap-[5px] pr-[7px]">
          <div className="flex items-center pr-px">
            <Row label="Наименование:" labelClass="w-[98px]" value="Оплата труда (УСН+ЕНВД распределяемая)" selected />
            <Row label="Код:" labelClass="ml-[31px] w-[32px]" fieldClass="w-[64px]" value="000000026" />
          </div>
          <div className="flex items-center">
            <Row label="Группа затрат:" labelClass="w-[98px]" buttons={["dots", "x"]} />
          </div>
        </div>
        <p className="mt-[14px]">Статья для учета затрат организации:</p>
        <RadioItem className="mt-[10px]" label="По деятельности с основной системой налогообложения (общая или упрощенная)" />
        <p className={`mt-[5px] ${DESC}`}>
          Основная система налогообложения указывается в учетной политике.<br />
          Затраты, накопленные в течение месяца, списываются в дебет счета 90.02.1<br />
          "Себестоимость продаж по деятельности с основной системой налогообложения"
        </p>
        <RadioItem className="mt-[10px]" label="По отдельным видам деятельности с особым порядком налогообложения" />
        <p className={`mt-[5px] ${DESC}`}>
          Затраты по деятельности, порядок налогообложения которой не совпадает с основным.<br />
          В частности, по деятельности, облагаемой ЕНВД.<br />
          Затраты, накопленные в течение месяца, списываются в дебет счета 90.02.2 "Себестоимость<br />
          продаж по отдельным видам деятельности с особым порядком налогообложения"
        </p>
        <RadioItem className="relative z-10 mt-[2px] h-[24px] bg-[#fffbee]" label="По разным видам деятельности" checked />
        <p className={`-mt-[3px] ${DESC}`}>
          Затраты, которые невозможно отнести к определенному виду деятельности.<br />
          В конце месяца затраты списываются в дебет субсчетов счета 90.02<br />
          "Себестоимость продаж" пропорционально полученным доходам по ст.272 НК РФ
        </p>
        <div className="mt-[17px] flex items-center pl-[7px]">
          <Row label="Вид расхода:" labelClass="w-[125px]" value="Оплата труда" buttons={["dots"]} />
        </div>
      </div>
    </Window>
  );
}

/* Hand-drawn red callouts linking the windows */
const Callouts = () => (
  <svg className="pointer-events-none absolute top-0 left-0 z-20" width="1000" height="850" viewBox="0 0 1000 850" fill="none" stroke="#cb4a68" strokeWidth="2" strokeLinecap="round" aria-hidden="true">
    <path d="M577 205L417 269" />
    <path d="M422 259q-6 3-6 8l-3 2M416 272l18 1v-3" strokeWidth="1.200" />
    <rect x="132" y="277" width="254" height="23" rx="10" />
    <path d="M242 303L256 361" />
    <rect x="182" y="384" width="246" height="22" rx="10" />
    <path d="M193 418L169 567" />
    <rect x="129" y="574" width="213" height="30" rx="9" />
    <path d="M265 612l1 15" />
    <path d="M316 637L632 458" />
    <path d="M642 453.500L773 457" />
    <rect x="660" y="743" width="283" height="27" rx="10" />
  </svg>
);

const TASKS: [string, ReactNode][] = [
  ["Панель функций", <PanelIcon />],
  ["Начисления зарплат...", <DocIcon />],
  ["Начисле...: Проведен *", <DocIcon />],
  ["Начисления организ...", <LayersIcon />],
  ["...: з/пл АУП (распре...", <LayersIcon />],
  ["Способы отражения ...", <TableIcon />],
  ["...: Зарплата АУП рас...", <TableIcon />],
  ["Статьи затрат", <TableIcon />],
  ["...: Оплата труда (УС...", <TableIcon />],
];

export default function App() {
  return (
    <div className="flex h-screen flex-col overflow-hidden bg-[#f8ecdc] font-['Liberation_Sans',Arial,sans-serif] text-[11px] leading-[13px] text-[#38300f]">
      <main className="relative min-h-0 flex-1 overflow-hidden">
        <MainWindow />
        <ChargesWindow />
        <ChargeCardWindow />
        <ReflectionWindow />
        <CostItemsWindow />
        <CostItemWindow />
        <Callouts />
      </main>
      <nav aria-label="Окна" className="flex h-[18px] shrink-0 gap-px overflow-hidden bg-[#f6edc9] pt-[3px] pl-px">
        {TASKS.map(([name, icon], i) => (
          <button
            key={name}
            type="button"
            className={`flex h-5 w-[141px] shrink-0 items-center gap-[2px] overflow-hidden pl-[2px] whitespace-nowrap text-[#222] ${i === 8 ? "bg-[#a9c6ea]" : "bg-[#acacac]"}`}
          >
            {icon}
            <span>{name}</span>
          </button>
        ))}
      </nav>
    </div>
  );
}
